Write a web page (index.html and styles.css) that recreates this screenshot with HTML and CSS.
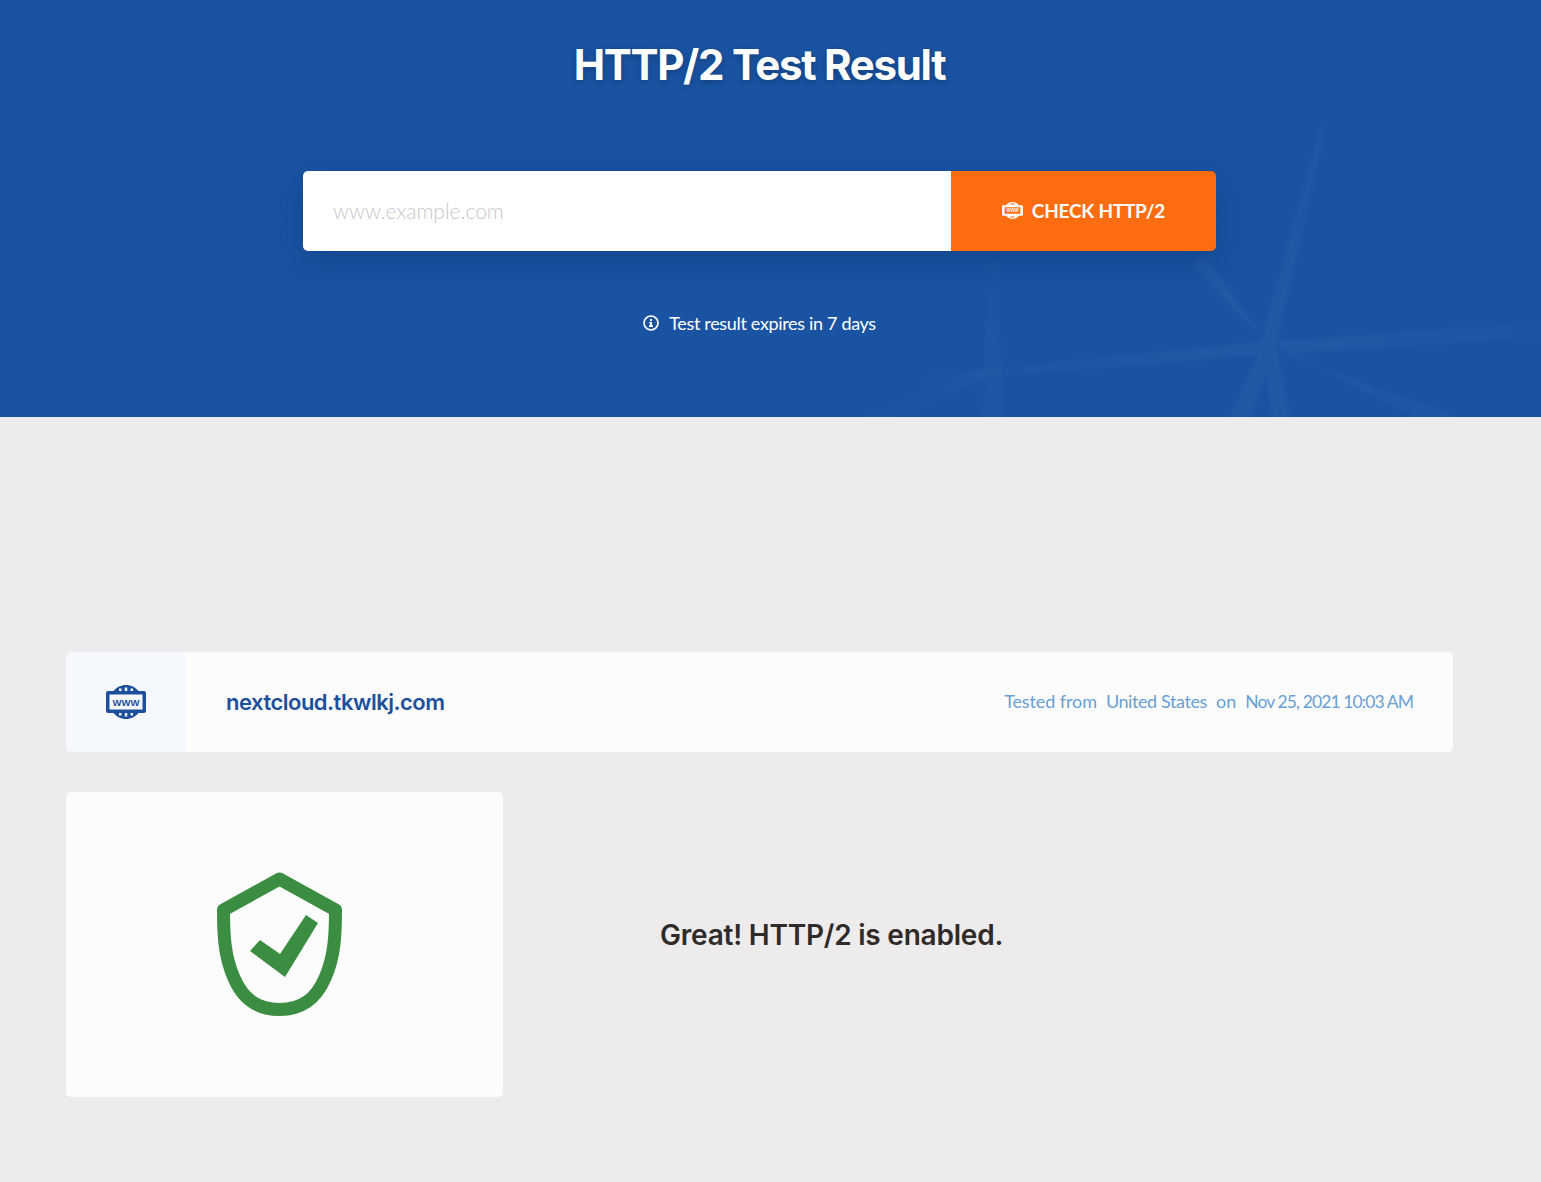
FILE: index.html
```html
<!DOCTYPE html>
<html lang="en">
<head>
    <meta charset="UTF-8">
    <meta name="viewport" content="width=device-width, initial-scale=1.0">
    <title>HTTP/2 Test Result</title>
    <link rel="stylesheet" href="styles.css">
</head>
<body>
    <header class="hero">
        <!-- faint star rays behind the form -->
        <svg class="hero-rays" width="1541" height="417" viewBox="0 0 1541 417" aria-hidden="true">
            <defs>
                <radialGradient id="rayFade" gradientUnits="userSpaceOnUse" cx="1268" cy="345" r="330">
                    <stop offset="0" stop-color="#fff" stop-opacity="0.04"/>
                    <stop offset="1" stop-color="#fff" stop-opacity="0.01"/>
                </radialGradient>
                <radialGradient id="rayFadeSmall" gradientUnits="userSpaceOnUse" cx="990" cy="372" r="180">
                    <stop offset="0" stop-color="#fff" stop-opacity="0.022"/>
                    <stop offset="1" stop-color="#fff" stop-opacity="0.006"/>
                </radialGradient>
            </defs>
            <path fill="url(#rayFade)" d="M1322 120L1328 120L1276 345L1260 345zM1541 322L1541 338L1270 354L1268 342zM1262 340L1275 340L1290 417L1272 417zM1262 345L1275 350L1250 417L1230 417zM1270 342L1276 352L1460 417L1415 417zM1266 342L1274 350L1190 265L1205 255zM1268 341L1268 354L1030 374L880 380z"/>
            <path fill="url(#rayFadeSmall)" d="M988 262L998 262L1002 417L983 417zM985 368L995 376L895 417L860 417z"/>
        </svg>
        <h1 class="hero-title">HTTP/2 Test Result</h1>
        <form class="check-form">
            <input class="check-input" type="text" placeholder="www.example.com">
            <button class="check-btn" type="button">
                <svg width="21" height="17" viewBox="0 0 40 32" aria-hidden="true">
                    <path fill="#fff" fill-rule="evenodd" d="M8 6C11 2 15 0 20 0s9 2 12 6h6a2 2 0 0 1 2 2v16a2 2 0 0 1-2 2h-6c-3 4-7 6-12 6s-9-2-12-6H2a2 2 0 0 1-2-2V8a2 2 0 0 1 2-2zM5 10v12h30V10z"/>
                    <path fill="#fd6c0e" d="M16 2.500h8v2h-8zM16 27.500h8v2h-8z"/>
                    <text x="20" y="19.500" text-anchor="middle" class="www-small">WWW</text>
                </svg>
                CHECK HTTP/2
            </button>
        </form>
        <p class="expires">
            <svg width="16" height="16" viewBox="0 0 16 16" aria-hidden="true">
                <circle cx="8" cy="8" r="7" fill="none" stroke="#fff" stroke-width="1.7"/>
                <path fill="#fff" d="M7 4h2v2H7zM6.200 7H9v3.200h1V12H6v-1.800h1V8.600h-.8z"/>
            </svg>
            Test result expires in 7 days
        </p>
    </header>

    <main class="results">
        <section class="site-bar">
            <div class="site-icon">
                <svg width="40" height="34" viewBox="0 0 40 34" aria-hidden="true">
                    <path fill="#1c4f9c" fill-rule="evenodd" d="M7.500 6C10.500 2.300 15 0 20 0s9.500 2.300 12.500 6H38a2 2 0 0 1 2 2v18a2 2 0 0 1-2 2h-5.500C29.500 31.700 25 34 20 34s-9.500-2.300-12.500-6H2a2 2 0 0 1-2-2V8a2 2 0 0 1 2-2zM3.500 9.500v15h33v-15z"/>
                    <path fill="#f5f8fc" d="M13 3.500h2.500v2.500H13zM18.750 2.500h2.500v3.500h-2.500zM24.500 3.500H27v2.500h-2.500zM13 28h2.500v2.500H13zM18.750 28h2.500v3.500h-2.500zM24.500 28H27v2.500h-2.500z"/>
                    <text x="20" y="20.500" text-anchor="middle" class="www-text">WWW</text>
                </svg>
            </div>
            <div class="site-name">nextcloud.tkwlkj.com</div>
            <div class="site-meta">
                <span class="meta-from">Tested from</span>
                <span class="meta-place">United States</span>
                <span>on</span>
                <span class="meta-date">Nov 25, 2021 10:03 AM</span>
            </div>
        </section>

        <section class="verdict">
            <div class="verdict-card">
                <svg width="126" height="146" viewBox="0 0 126 146" aria-hidden="true">
                    <path fill="none" stroke="#3b8e41" stroke-width="13" stroke-linejoin="round" d="M62.500 7L6.500 38C6.500 60 7 84 17 106C26 127 40 137.500 62.500 137.500C85 137.500 99 127 108 106C118 84 118.500 60 118.500 38z"/>
                    <path fill="#3b8e41" d="M89 43L101 51L68 105L33 79L43 68L63 82z"/>
                </svg>
            </div>
            <p class="verdict-text">Great! HTTP/2 is enabled.</p>
        </section>
    </main>
</body>
</html>
```

FILE: styles.css
```css
body {
    font-family: 'Lato', 'Open Sans', sans-serif;
    margin: 0;
    background-color: #edebec;
    min-height: 1182px;
}

.hero {
    position: relative;
    height: 417px;
    box-sizing: border-box;
    padding: 37px 22px 0 0;
    background-color: #1953a2;
    display: flex;
    flex-direction: column;
    align-items: center;
    overflow: hidden;
}

.hero-rays {
    position: absolute;
    top: 0;
    left: 0;
    filter: blur(1.5px);
}

.hero-title {
    position: relative;
    margin: 0;
    font-family: 'Inter', sans-serif;
    font-size: 42px;
    line-height: 56px;
    font-weight: 700;
    letter-spacing: -1.3px;
    color: #fff;
    text-shadow: 0 2px 6px rgba(0, 0, 0, 0.25);
}

.check-form {
    position: relative;
    display: flex;
    width: 913px;
    height: 80px;
    margin-top: 78px;
    border-radius: 5px;
    box-shadow: 0 10px 30px rgba(10, 40, 90, 0.3);
}

.check-input {
    flex: 1;
    min-width: 0;
    border: 0;
    padding: 0 30px 2px;
    font-family: inherit;
    font-size: 21px;
    font-weight: 300;
    background: #fff;
    border-radius: 5px 0 0 5px;
    outline: none;
}

.check-input::placeholder {
    color: #c8c8c8;
}

.check-btn {
    width: 265px;
    border: 0;
    padding: 0 0 1px;
    display: flex;
    align-items: center;
    justify-content: center;
    gap: 9px;
    background-color: #fd6c0e;
    color: #fff;
    font-family: 'Lato', sans-serif;
    font-size: 19px;
    font-weight: 700;
    letter-spacing: -0.25px;
    border-radius: 0 5px 5px 0;
}

.www-small {
    font-family: 'Liberation Sans', sans-serif;
    font-size: 8.5px;
    font-weight: 700;
    letter-spacing: 0;
    fill: #fff;
}

.expires {
    position: relative;
    display: flex;
    align-items: center;
    gap: 10px;
    margin: 60px 0 0;
    font-size: 18px;
    line-height: 24px;
    letter-spacing: -0.33px;
    color: #fff;
}

.results {
    width: 1387px;
    margin-left: 66px;
    padding-top: 235px;
}

.site-bar {
    display: flex;
    align-items: center;
    height: 100px;
    background-color: #fcfcfc;
    border-radius: 5px;
    overflow: hidden;
}

.site-icon {
    width: 120px;
    height: 100%;
    display: flex;
    align-items: center;
    justify-content: center;
    background-color: #f5f8fc;
}

.www-text {
    font-family: 'Liberation Sans', sans-serif;
    font-size: 9.5px;
    font-weight: 700;
    fill: #1c4f9c;
}

.site-name {
    margin-left: 40px;
    font-family: 'Inter', sans-serif;
    font-size: 22px;
    font-weight: 600;
    letter-spacing: -0.5px;
    color: #1c4f9c;
}

.site-meta {
    margin-left: auto;
    margin-right: 40px;
    display: flex;
    align-items: baseline;
    gap: 9px;
    font-size: 18px;
    line-height: 22px;
    margin-top: -2px;
    color: #6a9fd4;
}

.meta-from {
    letter-spacing: -0.1px;
}

.meta-place {
    letter-spacing: -0.4px;
}

.meta-date {
    font-size: 17.5px;
    letter-spacing: -0.9px;
}

.verdict {
    display: flex;
    align-items: center;
    margin-top: 40px;
}

.verdict-card {
    width: 437px;
    height: 305px;
    box-sizing: border-box;
    padding: 80px 0 0 151px;
    background-color: #fcfcfc;
    border-radius: 5px;
}

.verdict-text {
    margin: 0 0 20px 157px;
    font-family: 'Inter', sans-serif;
    font-size: 28px;
    font-weight: 600;
    letter-spacing: -0.22px;
    color: #2f2b29;
}
```
